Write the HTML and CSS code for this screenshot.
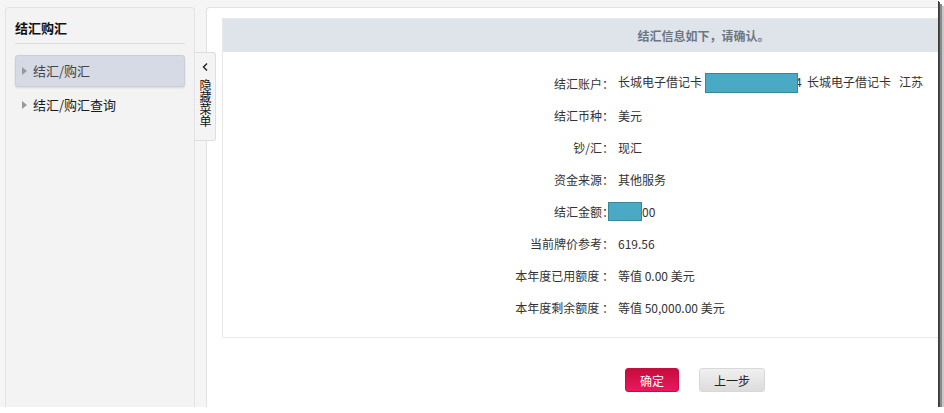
FILE: index.html
```html
<!DOCTYPE html>
<html lang="zh-CN">
<head>
    <meta charset="UTF-8">
    <title>结汇购汇</title>
    <link rel="stylesheet" href="styles.css">
</head>
<body>

<div class="shot">
    <div class="sidebar">
        <h3>结汇购汇</h3>
        <ul class="menu">
            <li class="active"><span class="arrow"></span>结汇/购汇</li>
            <li><span class="arrow"></span>结汇/购汇查询</li>
        </ul>
        <div class="toggle">
            <svg class="chev" width="8" height="10" viewBox="0 0 8 10">
                <path d="M6 1.5 L2.5 5 L6 8.5" fill="none" stroke="#222" stroke-width="1.4"/>
            </svg>
            <span class="vtext">隐藏菜单</span>
        </div>
    </div>

    <div class="main">
        <div class="info">
            <div class="info-head">结汇信息如下，请确认。</div>
            <div class="rows">
                <div class="label">结汇账户：</div>
                <div class="value">长城电子借记卡<span class="mask mask-card"></span>4&nbsp;&nbsp;长城电子借记卡&nbsp;&nbsp;&nbsp;江苏</div>

                <div class="label">结汇币种：</div>
                <div class="value">美元</div>

                <div class="label">钞/汇：</div>
                <div class="value">现汇</div>

                <div class="label">资金来源：</div>
                <div class="value">其他服务</div>

                <div class="label">结汇金额：</div>
                <div class="value amount"><span class="mask mask-amount"></span>00</div>

                <div class="label">当前牌价参考：</div>
                <div class="value">619.56</div>

                <div class="label">本年度已用额度 ：</div>
                <div class="value">等值 0.00 美元</div>

                <div class="label">本年度剩余额度 ：</div>
                <div class="value">等值 50,000.00 美元</div>
            </div>
        </div>

        <div class="actions">
            <button class="btn btn-ok">确定</button>
            <button class="btn btn-back">上一步</button>
        </div>
    </div>
</div>

</body>
</html>
```

FILE: styles.css
```css
body {
    margin: 0;
    background-color: #fff;
    font-family: "Noto Sans CJK SC", "Microsoft YaHei", sans-serif;
    font-size: 12px;
    color: #333;
}
.shot {
    width: 938px;
    height: 407px;
    box-sizing: border-box;
    padding: 7px 0 0 5px;
    background-color: #f5f5f5;
    display: flex;
    overflow: hidden;
    box-shadow: 1px 1px 0 #3c3c3c, 2px 2px 0 #4a4a4a, 4px 4px 0 #8a8a8a, 6px 6px 0 #c8c8c8;
}
.sidebar {
    position: relative;
    width: 190px;
    box-sizing: border-box;
    padding: 11px 9px 0 9px;
    background-color: #f3f3f3;
    border: 1px solid #e3e3e3;
    border-bottom: none;
    border-radius: 4px 4px 0 0;
}
.sidebar h3 {
    margin: 0;
    padding-bottom: 6px;
    font-size: 13px;
    line-height: 18px;
    font-weight: bold;
    color: #111;
    border-bottom: 1px solid #dcdcdc;
}
.menu {
    list-style: none;
    margin: 11px 0 0 0;
    padding: 0;
}
.menu li {
    height: 32px;
    line-height: 32px;
    padding-left: 6px;
    font-size: 13px;
    color: #1a1a1a;
    display: flex;
    align-items: center;
    box-sizing: border-box;
    border: 1px solid transparent;
    border-radius: 3px;
    margin-bottom: 2px;
}
.menu li.active {
    background-color: #d5dae4;
    border-color: #c9ced9;
    color: #444;
    box-shadow: 0 1px 2px rgba(0, 0, 0, 0.12);
}
.arrow {
    width: 0;
    height: 0;
    border-top: 4px solid transparent;
    border-bottom: 4px solid transparent;
    border-left: 5px solid #9a9a9a;
    margin-right: 6px;
}
.toggle {
    position: absolute;
    top: 44px;
    right: -22px;
    width: 21px;
    height: 89px;
    box-sizing: border-box;
    background-color: #f4f4f4;
    border: 1px solid #dedede;
    border-left: none;
    border-radius: 0 3px 3px 0;
    display: flex;
    flex-direction: column;
    align-items: center;
    padding-top: 9px;
    z-index: 2;
}
.chev {
    display: block;
}
.vtext {
    writing-mode: vertical-lr;
    text-orientation: upright;
    font-size: 12px;
    line-height: 12px;
    color: #111;
    margin-top: 7px;
}
.main {
    flex: 1;
    margin-left: 11px;
    background-color: #fff;
    border: 1px solid #e2e2e2;
    border-right: none;
    border-bottom: none;
    border-radius: 4px 0 0 0;
    padding: 10px 0 0 15px;
}
.info {
    border: 1px solid #e8e8e8;
    border-right: none;
}
.info-head {
    height: 33px;
    line-height: 33px;
    background-color: #dfe4eb;
    padding-left: 246px;
    text-align: center;
    font-weight: bold;
    color: #6e7682;
}
.rows {
    display: grid;
    grid-template-columns: 391px 1fr;
    grid-auto-rows: 32px;
    align-items: center;
    padding: 15px 0 14px 0;
}
.label {
    text-align: right;
    color: #333;
}
.value {
    padding-left: 4px;
    color: #333;
    white-space: nowrap;
}
.mask {
    display: inline-block;
    background-color: #4aa9c5;
    border: 1px solid #3a8799;
    box-sizing: border-box;
    vertical-align: middle;
}
.mask-card {
    width: 93px;
    height: 20px;
    margin-left: 3px;
    margin-right: -3px;
    position: relative;
}
.amount {
    position: relative;
    padding-left: 28px;
}
.mask-amount {
    position: absolute;
    left: -6px;
    top: -1px;
    width: 34px;
    height: 19px;
}
.actions {
    padding: 30px 0 0 403px;
    display: flex;
    gap: 20px;
}
.btn {
    height: 24px;
    border-radius: 3px;
    font-family: inherit;
    font-size: 12px;
    cursor: pointer;
}
.btn-ok {
    width: 54px;
    border: 1px solid #c40e3e;
    color: #fff;
    background: linear-gradient(#c50d3c, #ec1761);
}
.btn-back {
    width: 66px;
    border: 1px solid #d8d8d8;
    color: #222;
    background: linear-gradient(#f0f0f0, #dcdcdc);
}
```
